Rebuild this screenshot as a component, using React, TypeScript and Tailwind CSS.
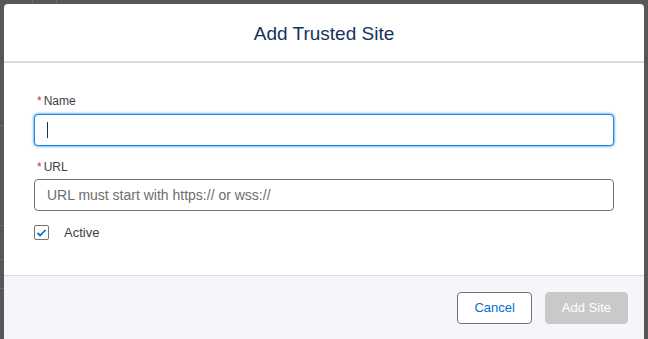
export default function App() {
  return (
    <div
      className="relative w-[648px] h-[339px] overflow-hidden bg-[#575757] pt-[4px] px-[4px]"
      style={{ fontFamily: '"Liberation Sans", Arial, sans-serif' }}
    >
      {/* bits of the page behind the backdrop */}
      <div className="absolute left-[32px] top-0 h-[4px] w-px bg-[#6a6a6a]" />
      <div className="absolute left-[56px] top-0 h-[4px] w-px bg-[#6a6a6a]" />
      <div className="absolute left-0 top-[125px] h-px w-[4px] bg-[#6a6a6a]" />
      <div className="absolute left-0 top-[225px] h-px w-[4px] bg-[#6a6a6a]" />
      <div className="absolute left-0 top-[259px] h-px w-[4px] bg-[#6a6a6a]" />
      <div className="absolute left-0 top-[288px] h-px w-[4px] bg-[#6a6a6a]" />

      <div className="flex h-[335px] flex-col overflow-hidden rounded-t-[4px] bg-white">
        {/* Header */}
        <div className="flex h-[59px] shrink-0 items-center justify-center border-b-2 border-[#d8dde6] pt-[3px]">
          <h2 className="text-[19px] leading-6 text-[#16325c]">Add Trusted Site</h2>
        </div>

        {/* Body */}
        <div className="h-[212px] shrink-0 px-[30px] pt-[30px]">
          <label className="flex h-4 items-center pl-[3px] text-[12px] leading-4 text-[#3e3e3c]">
            <abbr className="mr-[2px] text-[#c23934] no-underline" title="required">*</abbr>
            Name
          </label>
          <div className="relative mt-[5px] flex h-[32px] items-center rounded-[4px] border border-[#1589ee] bg-white pl-3 shadow-[0_0_3px_#0070d2]">
            <span className="h-[16px] w-px bg-[#16325c]" />
          </div>

          <label className="mt-[13px] flex h-4 items-center pl-[3px] text-[12px] leading-4 text-[#3e3e3c]">
            <abbr className="mr-[2px] text-[#c23934] no-underline" title="required">*</abbr>
            URL
          </label>
          <div className="mt-[4px] flex h-[32px] items-center rounded-[4px] border border-[#747474] bg-white pl-3">
            <span className="text-[14px] text-[#706e6b]">URL must start with https:// or wss://</span>
          </div>

          <div className="mt-[12px] flex items-center">
            <span className="flex h-[15px] w-[15px] items-center justify-center rounded-[2px] border border-[#747474] bg-white">
              <svg width="9" height="8" viewBox="0 0 9 8" className="mt-[1px]">
                <polyline points="1,4.5 3.2,6.5 8,1.5" fill="none" stroke="#0070d2" strokeWidth="1.8" strokeLinecap="round" strokeLinejoin="round" />
              </svg>
            </span>
            <span className="ml-[15px] text-[13px] text-[#3e3e3c]">Active</span>
          </div>
        </div>

        {/* Footer */}
        <div className="flex flex-1 items-start justify-end gap-[13px] border-t border-[#d8dde6] bg-[#f4f6f9] px-4 pt-[16px]">
          <button className="h-[32px] rounded-[4px] border border-[#747474] bg-white px-4 text-[13px] text-[#0070d2]">
            Cancel
          </button>
          <button className="h-[32px] rounded-[4px] border border-[#c9c9c9] bg-[#c9c9c9] px-4 text-[13px] text-white">
            Add Site
          </button>
        </div>
      </div>
    </div>
  );
}
